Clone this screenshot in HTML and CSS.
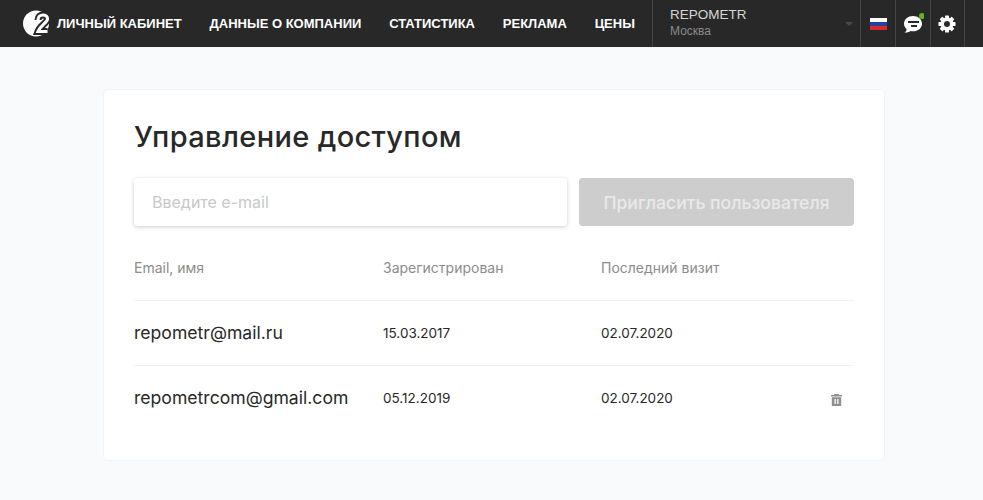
FILE: index.html
```html
<!DOCTYPE html>
<html lang="ru">
<head>
<meta charset="utf-8">
<title>Управление доступом</title>
<link rel="stylesheet" href="styles.css">
</head>
<body>
<header class="topbar">
  <a class="logo" href="#">
    <svg width="28" height="27" viewBox="0 0 28 27"><circle cx="13" cy="13.500" r="13" fill="#fff"/><path d="M15 10C15 6.500 17.500 5 20 5 22.500 5 24.500 6.500 24.500 8.800 24.500 12.800 17.500 15 15 21.500H24.500" fill="none" stroke="#282828" stroke-width="7"/><path d="M15 10C15 6.500 17.500 5 20 5 22.500 5 24.500 6.500 24.500 8.800 24.500 12.800 17.500 15 15 21.500H24.500" fill="none" stroke="#fff" stroke-width="3.200"/></svg>
  </a>
  <nav class="nav">
    <a href="#">ЛИЧНЫЙ КАБИНЕТ</a>
    <a href="#">ДАННЫЕ О КОМПАНИИ</a>
    <a href="#">СТАТИСТИКА</a>
    <a href="#">РЕКЛАМА</a>
    <a href="#">ЦЕНЫ</a>
  </nav>
  <div class="account">
    <div class="account-text">
      <div class="account-name">REPOMETR</div>
      <div class="account-city">Москва</div>
    </div>
    <span class="caret"></span>
  </div>
  <div class="cell">
    <svg width="17" height="12" viewBox="0 0 17 12"><rect width="17" height="4" fill="#fff"/><rect y="4" width="17" height="4" fill="#2142a8"/><rect y="8" width="17" height="4" fill="#d52b2b"/></svg>
  </div>
  <div class="cell">
    <svg width="22" height="22" viewBox="0 0 22 22"><path d="M11 3c5 0 9 3.400 9 7.700s-4 7.600-9 7.600c-.9 0-1.700-.1-2.500-.3-1.400 1-3.500 1.700-6 1.700 1.200-.9 2-2.100 2.200-3.500C3.200 14.800 2 12.900 2 10.700 2 6.400 6 3 11 3z" fill="#fff"/><rect x="6" y="8" width="11" height="2" fill="#282828"/><rect x="9" y="12" width="6" height="2" fill="#282828"/><circle cx="20" cy="3" r="3" fill="#5fb51e"/></svg>
  </div>
  <div class="cell cell-last">
    <svg width="18" height="18" viewBox="0 0 18 18"><g fill="#fff"><rect x="7" y=".5" width="4" height="17" rx=".6"/><rect x="7" y=".5" width="4" height="17" rx=".6" transform="rotate(45 9 9)"/><rect x="7" y=".5" width="4" height="17" rx=".6" transform="rotate(90 9 9)"/><rect x="7" y=".5" width="4" height="17" rx=".6" transform="rotate(135 9 9)"/><circle cx="9" cy="9" r="6.500"/></g><circle cx="9" cy="9" r="3" fill="#282828"/></svg>
  </div>
</header>

<main class="page">
  <section class="card">
    <h1 class="title">Управление доступом</h1>
    <form class="invite">
      <input class="email" type="text" placeholder="Введите e-mail">
      <button class="submit" type="button">Пригласить пользователя</button>
    </form>
    <div class="row row-head">
      <div>Email, имя</div>
      <div>Зарегистрирован</div>
      <div>Последний визит</div>
      <div></div>
    </div>
    <div class="row">
      <div class="user">repometr@mail.ru</div>
      <div>15.03.2017</div>
      <div>02.07.2020</div>
      <div></div>
    </div>
    <div class="row">
      <div class="user">repometrcom@gmail.com</div>
      <div>05.12.2019</div>
      <div>02.07.2020</div>
      <div class="actions">
        <svg width="11" height="12" viewBox="0 0 11 12"><path fill="#8f8f8f" fill-rule="evenodd" d="M3.500 0h4l.5 1h3v1.500H0V1h3zM.8 3.300h9.400V12H.8zM3.500 5v5h1.300V5zM6.200 5v5h1.300V5z"/></svg>
      </div>
    </div>
  </section>
</main>
</body>
</html>
```
FILE: styles.css
```css
* { box-sizing: border-box; }
html, body { margin: 0; height: 100%; }
body {
  background: #f9fafc;
  font-family: Inter, "Liberation Sans", sans-serif;
  color: #282828;
  overflow: hidden;
}
a { color: inherit; text-decoration: none; }

.topbar {
  display: flex;
  align-items: stretch;
  height: 47px;
  background: #282828;
  padding-right: 18px;
}
.logo { display: flex; align-items: center; padding-left: 23px; width: 57px; }
.nav {
  display: flex;
  align-items: center;
  gap: 27.800px;
  color: #fff;
  font: 700 13px "Liberation Sans", Arial, sans-serif;
  flex: none;
  width: 595px;
}
.account {
  display: flex;
  align-items: center;
  justify-content: space-between;
  width: 208px;
  padding: 0 7px 0 17px;
  border-left: 1px solid #454545;
}
.account-name { font: 13.500px/16px "Liberation Sans", Arial, sans-serif; color: #d5d5d5; margin-top: -2px; }
.account-city { font: 12px/14px "Liberation Sans", Arial, sans-serif; color: #8a8a8a; margin-top: 1px; }
.caret {
  width: 0; height: 0;
  border-left: 4px solid transparent;
  border-right: 4px solid transparent;
  border-top: 4px solid #484848;
}
.cell {
  display: flex;
  align-items: center;
  justify-content: center;
  width: 35px;
  border-left: 1px solid #454545;
}
.cell-last { border-right: 1px solid #454545; padding-right: 1px; }

.page { padding: 43px 99px 0 104px; }
.card {
  width: 780px;
  height: 370px;
  background: #fff;
  box-shadow: 0 0 0 1px #f3f4f6;
  border-radius: 4px;
  padding: 29px 30px 0;
}
.title {
  margin: 0;
  font-size: 29px;
  font-weight: 500;
  line-height: 36px;
  letter-spacing: .35px;
  color: #282828;
}
.invite { display: flex; gap: 12px; margin-top: 23px; }
.email {
  width: 433px;
  height: 48px;
  padding: 0 18px;
  border: 0;
  border-radius: 4px;
  background: #fff;
  box-shadow: 0 1px 4px rgba(0,0,0,.2);
  font: 16px Inter, sans-serif;
  outline: none;
}
.email::placeholder { color: #c8c8c8; opacity: 1; }
.submit {
  width: 275px;
  height: 48px;
  border: 0;
  border-radius: 4px;
  background: #cdcdcd;
  color: #e9e9e9;
  font: 500 17.600px Inter, sans-serif;
}
.row {
  display: grid;
  grid-template-columns: 249px 218px 1fr 30px;
  align-items: center;
  height: 65px;
  font-size: 13.500px;
  color: #282828;
  border-bottom: 1px solid #f2f2f2;
}
.row:last-child { height: 64px; border-bottom: 0; }
.row-head { height: 75px; padding-top: 8px; font-size: 14px; color: #8c8c8c; }
.user { font-size: 17.600px; margin-top: -1px; }
.actions { display: flex; justify-content: flex-end; padding-right: 12px; margin-top: 4px; }
```
